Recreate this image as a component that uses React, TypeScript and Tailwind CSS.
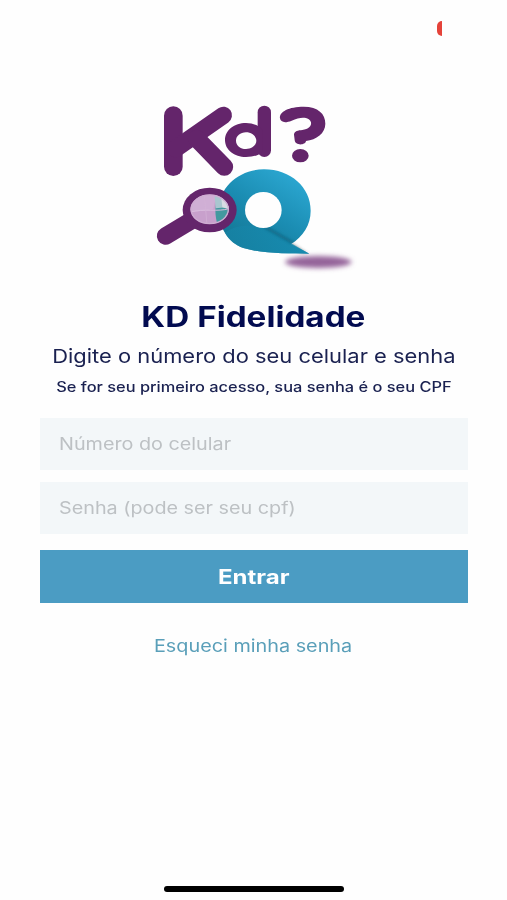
import { useState } from 'react';

const Logo = () => (
  <svg viewBox="0 0 660 570" className="ml-[3px] h-[190px] w-[220px]" aria-label="Kd?">
    <defs>
      <linearGradient id="pin" x1="0.8" y1="0.1" x2="0.25" y2="0.9">
        <stop offset="0" stopColor="#2aa5cf" />
        <stop offset="0.5" stopColor="#1b8db3" />
        <stop offset="1" stopColor="#147896" />
      </linearGradient>
      <linearGradient id="tail" x1="0" y1="0" x2="1" y2="0.3">
        <stop offset="0" stopColor="#1784a6" />
        <stop offset="1" stopColor="#168bb0" />
      </linearGradient>
      <filter id="soft" x="-20%" y="-60%" width="140%" height="220%">
        <feGaussianBlur stdDeviation="8" />
      </filter>
      <filter id="crease" x="-30%" y="-30%" width="160%" height="160%">
        <feGaussianBlur stdDeviation="4" />
      </filter>
      <clipPath id="lens">
        <ellipse cx="194" cy="358" rx="57" ry="44" />
      </clipPath>
      <clipPath id="body">
        <path d="M228 360C228 288 285 238 357 238C437 238 497 292 497 362C497 405 474 440 438 462L420 480L228 440Z" />
      </clipPath>
    </defs>

    {/* shadow on the ground */}
    <ellipse cx="520" cy="516" rx="100" ry="18" fill="#94639a" filter="url(#soft)" />
    <path d="M440 458L486 488L472 490L425 470Z" fill="#555" opacity="0.5" filter="url(#crease)" />

    {/* pin */}
    <path
      d="M222 360C222 288 285 238 357 238C437 238 497 292 497 362C497 405 474 440 438 462L493 491C430 491 350 491 295 474C250 458 222 415 222 360Z"
      fill="url(#pin)"
    />
    <path d="M240 428C275 400 330 405 360 414L493 491C430 491 350 491 295 474C270 465 252 449 240 428Z" fill="url(#tail)" opacity="0.7" />
    <g clipPath="url(#body)">
      <path d="M360 411L446 460" stroke="#0d5872" strokeWidth="7" opacity="0.7" filter="url(#crease)" />
    </g>
    <ellipse cx="355" cy="360" rx="55" ry="54" fill="#fefefe" />

    {/* magnifying glass */}
    <path d="M142 390L62 438" stroke="#64256b" strokeWidth="53" strokeLinecap="round" />
    <ellipse cx="194" cy="360" rx="81" ry="67" fill="#64256b" />
    <g clipPath="url(#lens)">
      <rect x="130" y="310" width="130" height="100" fill="#c8a0cc" />
      <path d="M130 310H215L205 358L130 368Z" fill="#d0afd5" />
      <path d="M218 325C208 348 210 380 218 405H260V325Z" fill="#43999f" />
      <path d="M208 310H260V350L212 355Z" fill="#a9c6cf" />
      <path d="M228 315L260 345V360L232 352Z" fill="#d7dce4" />
      <path d="M137 366C175 355 220 366 252 356" stroke="#d9bddd" strokeWidth="3" fill="none" />
      <path d="M178 314L186 405" stroke="#d3b4d7" strokeWidth="2" />
    </g>
    <ellipse cx="194" cy="358" rx="56" ry="43" fill="none" stroke="#cfacd2" strokeWidth="4" />

    {/* K */}
    <g fill="none" stroke="#64256b" strokeLinecap="round">
      <path d="M85 77V230" strokeWidth="56" />
      <path d="M92 176L235 76" strokeWidth="52" />
      <path d="M155 146L238 231" strokeWidth="53" />
      <path d="M358 67V181" strokeWidth="40" />
    </g>

    {/* d */}
    <path
      fillRule="evenodd"
      fill="#64256b"
      d="M240 150C240 120 268 99 303 99C325 99 345 108 352 120V185C342 196 325 201 303 201C268 201 240 180 240 150ZM273 152C273 166 286 177 303 177C320 177 334 166 334 152C334 138 320 127 303 127C286 127 273 138 273 152Z"
    />

    {/* question mark */}
    <path
      fill="#64256b"
      d="M405 85C402 65 432 50 476 50C520 50 541 72 541 101C541 130 514 149 483 153C482 166 450 168 449 150L447 134C447 123 460 121 472 120C490 118 500 109 498 97C495 82 470 77 440 92C420 100 407 97 405 85Z"
    />
    <ellipse cx="466" cy="197" rx="25" ry="20" fill="#64256b" />
  </svg>
);

type FieldProps = {
  type: string;
  placeholder: string;
  value: string;
  onChange: (value: string) => void;
};

const Field = ({ type, placeholder, value, onChange }: FieldProps) => (
  <div className="h-[52.5px] bg-[#f3f7f9] pl-[19px]">
    <input
      type={type}
      placeholder={placeholder}
      value={value}
      onChange={e => onChange(e.target.value)}
      className="h-full w-[330px] origin-left scale-x-[1.163] bg-transparent text-[17px] text-[#0b1648] outline-none placeholder:text-[#bdc1c4]"
    />
  </div>
);

const App = () => {
  const [phone, setPhone] = useState('');
  const [password, setPassword] = useState('');

  return (
    <div className="flex h-[900px] w-[507px] flex-col overflow-hidden bg-[#fefefe] font-['Inter','Liberation_Sans',sans-serif]">
      <div className="flex h-[90px] justify-end pt-[21px] pr-[65px]">
        <div className="h-[15px] w-[5px] rounded-l-full bg-[#e5433a]" />
      </div>

      <div className="flex justify-center">
        <Logo />
      </div>

      <div className="mt-[17px] flex flex-col items-center whitespace-nowrap text-[#1a2150]">
        <h1 className="h-[41px] scale-x-[1.187] text-[28px] leading-10 font-bold text-[#020b50]">KD Fidelidade</h1>
        <p className="h-[37px] scale-x-[1.153] text-[19px] leading-[38px]">Digite o número do seu celular e senha</p>
        <p className="h-6 scale-x-[1.17] text-[14px] leading-6 font-medium">
          Se for seu primeiro acesso, sua senha é o seu CPF
        </p>
      </div>

      <form className="mt-[18.5px] flex flex-col pr-[39px] pl-10" onSubmit={e => e.preventDefault()}>
        <div className="flex flex-col gap-[11.5px]">
          <Field type="text" placeholder="Número do celular" value={phone} onChange={setPhone} />
          <Field type="password" placeholder="Senha (pode ser seu cpf)" value={password} onChange={setPassword} />
        </div>
        <button type="submit" className="mt-4 h-[53px] bg-[#4b9cc3] pt-px text-white">
          <span className="inline-block scale-x-[1.2] text-[20px] font-bold">Entrar</span>
        </button>
      </form>

      <a href="#" className="mt-[31px] self-center scale-x-[1.165] text-[17px] leading-6 text-[#5a9fb9]">
        Esqueci minha senha
      </a>

      <div className="mt-auto mb-2 ml-[164px] h-1.5 w-[180px] rounded-full bg-black" />
    </div>
  );
};

export default App;
